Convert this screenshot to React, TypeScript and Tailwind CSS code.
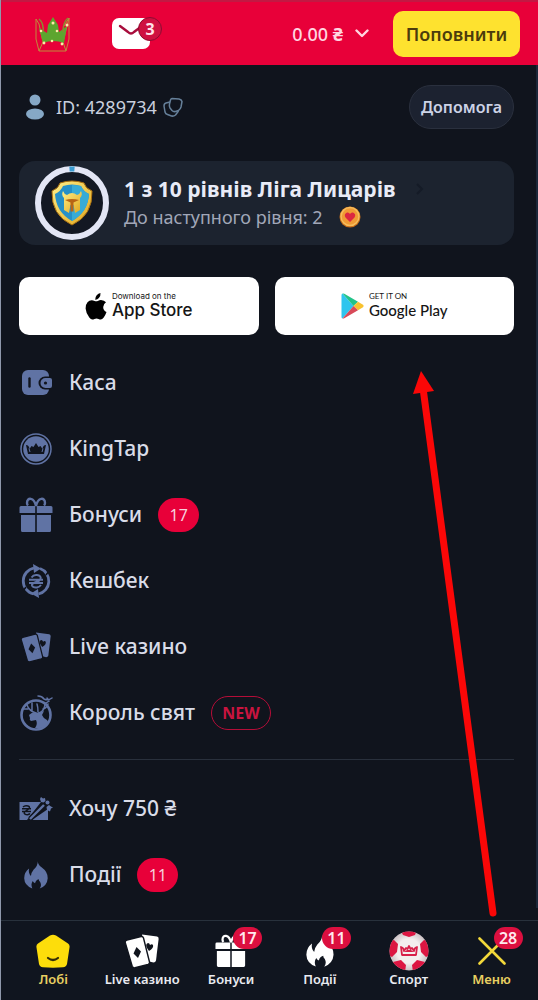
import React from "react";
import clsx from "clsx";

type IconProps = { className?: string };

const CrownLogo = () => (
  <svg viewBox="0 0 36 36" className="h-9 w-9" aria-hidden="true">
    <path d="M4 8 1 3v20l3 12h27l3-12V2l-5 8M4 8l4 18-4 9M31 35l-3-9 6-24" fill="none" stroke="#c08a3c" strokeWidth="1" />
    <path d="M8 27 4 12l8 5 1-8 5-8 5 8 1 7 8-6-3 17Q18 23 8 27Z" fill="#5da52f" />
    <path d="M4 3q5 4 4 13M33 2q-5 4-5 14" fill="none" stroke="#8a8a30" strokeWidth="1.500" />
    <g fill="#ffe9a8">
      <circle cx="18" cy="7" r="1.5" />
      <circle cx="6" cy="15" r="1.3" />
      <circle cx="32" cy="9" r="1.5" />
      <circle cx="22" cy="15" r="1.3" />
      <circle cx="9" cy="27" r="1.4" />
      <circle cx="17" cy="25" r="1.3" />
      <circle cx="27" cy="28" r="1.4" />
    </g>
  </svg>
);

const MailIcon = () => (
  <svg viewBox="0 0 38 31" className="h-[31px] w-[38px]" aria-hidden="true">
    <rect width="38" height="31" rx="7" fill="#fff" />
    <path d="m8 8 8 6q3 3 6 0l8-6" fill="none" stroke="#a80d3c" strokeWidth="2.4" strokeLinecap="round" />
  </svg>
);

const UserIcon = () => (
  <svg viewBox="0 0 18 26" className="h-[26px] w-[18px]" fill="#86a8c6" aria-hidden="true">
    <circle cx="9" cy="6" r="5.5" />
    <ellipse cx="9" cy="20" rx="9" ry="5.5" />
  </svg>
);

const CopyIcon = () => (
  <svg viewBox="0 0 20 20" className="h-5 w-5" fill="none" stroke="#66809a" strokeWidth="1.5" strokeLinejoin="round" aria-hidden="true">
    <path d="M9 1.500 16 2q2.500.5 3 2.500L18 10q-.5 2-2.500 3.500l-3 1q-2 .5-3.500-1L7 11Q6 9 6.500 7L7.500 3Q8 1.500 9 1.500Z" />
    <path d="M7 5 3 6Q1 6.500 1 9l1 6q.5 2 2.500 2.500l4 1.500q2 .5 4-1l3-4" />
  </svg>
);

const LeagueBadge = () => (
  <svg viewBox="0 0 74 74" className="h-[74px] w-[74px] shrink-0" aria-hidden="true">
    <defs>
      <linearGradient id="gold" x1="0" y1="0" x2="1" y2="1">
        <stop offset="0" stopColor="#fff08a" />
        <stop offset="1" stopColor="#e0a51b" />
      </linearGradient>
    </defs>
    <circle cx="37" cy="37" r="34" fill="#131823" stroke="#e3e6f5" strokeWidth="6" />
    <path d="M34.500 3.100A34 34 0 0 1 39.500 3.100" fill="none" stroke="#3a9bd0" strokeWidth="5" />
    <path d="M25 17q12-4 24 0 1 5 8 8 1 24-20 34-21-10-20-34 7-3 8-8Z" fill="url(#gold)" stroke="#a96f10" strokeWidth="1" />
    <path d="M28 20q9-3 18 0 2 5 8 8-1 18-17 27-16-9-17-27 6-3 8-8Z" fill="#2590c8" />
    <path d="M37 19v36q16-9 17-27-6-3-8-8-4-1-9-1Z" fill="#37abd6" />
    <path d="M29 32q-3-3-1-7 1 3 4 4 5-4 10 0 3-1 4-4 2 4-1 7v12l-5 3-1.500-8h-3L34 47l-5-3Z" fill="url(#gold)" />
    <path d="M30 34q7-2 14 0l-5.500 2.500v9h-3v-9Z" fill="#b86414" />
  </svg>
);

const HeartCoin = () => (
  <svg viewBox="0 0 22 22" className="h-[22px] w-[22px]" aria-hidden="true">
    <circle cx="11" cy="11" r="10.500" fill="#c96c18" />
    <circle cx="11" cy="10.500" r="9" fill="#f09a35" stroke="#f6bd5c" strokeWidth="1.500" />
    <path d="M11 16 6.500 11.500Q4.500 8 8 6.500q2-.5 3 1.500 1-2 3-1.500 3.500 1.500 1.500 5Z" fill="#dc2740" />
  </svg>
);

const AppleIcon = () => (
  <svg viewBox="0 0 22 27" className="h-[27px] w-[22px]" fill="#000" aria-hidden="true">
    <path d="M15.500 0q.3 3-1.600 5-1.600 1.900-3.700 1.700-.2-2.500 1.500-4.500Q13.300.4 15.500 0Z" />
    <path d="M21 9.200q-2.800 1.800-2.800 4.800 0 3.500 3.300 5-1 3-2.800 5.500-1.500 2-3 2-1 0-2.200-.6-2-.9-4 0-1.200.6-2.200.6-1.500 0-3-2.100Q.8 19.500.6 15.400.5 11.500 2.500 9.200q1.700-2 4.300-2 1.300 0 2.800.7 1.600.7 3.200 0 1.600-.8 3.200-.8 3.300.2 5 2.100Z" />
  </svg>
);

const PlayIcon = () => (
  <svg viewBox="0 0 23 26" className="h-[26px] w-[23px]" aria-hidden="true">
    <path d="M1.500.5 12.500 13 1.500 25.500Q.5 25 .5 24V2Q.5 1 1.500.5Z" fill="#2fc5ee" />
    <path d="M1.500.5q.8-.3 1.800.3L17 8.800 12.500 13Z" fill="#22c389" />
    <path d="m17 8.800 5 3q1.200 1.200 0 2.400l-5 3L12.500 13Z" fill="#f8c22f" />
    <path d="m12.500 13 4.500 4.200-13.700 8q-1 .6-1.800.3Z" fill="#d84a59" />
  </svg>
);

const WalletIcon = ({ className }: IconProps) => (
  <svg viewBox="0 0 32 32" className={className} aria-hidden="true">
    <rect x="2" y="3" width="27" height="25" rx="6" fill="currentColor" />
    <path d="M9.500 11.500v8" stroke="#10141d" strokeWidth="2.400" strokeLinecap="round" />
    <path d="M33 9.500h-8a6.500 6.500 0 0 0 0 13h8Z" fill="#10141d" />
    <path d="M30 11h-4.500a4.500 4.500 0 0 0 0 10H30q2 0 2-2v-6q0-2-2-2Z" fill="currentColor" />
    <circle cx="25.500" cy="16" r="1.600" fill="#10141d" />
  </svg>
);

const CoinIcon = ({ className }: IconProps) => (
  <svg viewBox="0 0 32 32" className={className} aria-hidden="true">
    <circle cx="16" cy="16" r="15" fill="none" stroke="currentColor" strokeWidth="1.500" />
    <circle cx="16" cy="16" r="12.800" fill="currentColor" />
    <path d="m8 21-2-9q3 0 3.500 4l2-3 2 1 2.500-4 2.500 4 2-1 2 3Q23 12 26 12l-2 9Z" fill="#10141d" />
    <path d="M9 15.500 10 19M23 15.500 22 19" stroke="currentColor" strokeWidth="1" />
  </svg>
);

const GiftIcon = ({ className }: IconProps) => (
  <svg viewBox="0 0 34 36" className={className} fill="currentColor" aria-hidden="true">
    <path d="M17 9C15 0 8 0 8 6q0 1.500 1 2.500M17 9c2-9 9-9 9-3q0 1.500-1 2.500" fill="none" stroke="currentColor" strokeWidth="2.400" />
    <path d="M2 9h14.200v7H.5v-5.500Q.5 9 2 9ZM17.800 9H32q1.500 0 1.500 1.500V16H17.800ZM2 18h14.200v17H3.500Q2 35 2 33.500ZM17.800 18H32v15.500q0 1.500-1.500 1.500H17.800Z" />
  </svg>
);

const CashbackIcon = ({ className }: IconProps) => (
  <svg viewBox="0 0 32 34" className={className} aria-hidden="true">
    <g fill="none" stroke="currentColor" strokeWidth="2.800">
      <path d="M13.500 30A13.300 13.300 0 0 1 14 4M18.500 30A13.300 13.300 0 0 0 20 4.500" />
    </g>
    <path d="m13 0 8 4.500-7 4.500ZM19 34l-8-4.500 7-4.500Z" fill="currentColor" />
    <path d="m6 23-3 4M26 11l3-4" stroke="#10141d" strokeWidth="1.500" />
    <path d="M11.500 13.500q2-3 5.500-2.500 4.500.7 3.500 4-1 2-4.500 3-4.500 1.500-4 3.500 1 2.500 5 2 2.500-.5 4-2.500M9 15.700h14M9 19h14" fill="none" stroke="currentColor" strokeWidth="2" />
  </svg>
);

const CardsIcon = ({ className }: IconProps) => (
  <svg viewBox="0 0 34 34" className={className} aria-hidden="true">
    <path d="m17 .5 15 2q1.800.3 1.600 2.500L31 26.500q-.5 2-2.500 2L22 27Z" fill="currentColor" />
    <path d="M22 14q-2-4 1-5 1.500 0 2 2 2-1.500 3 0 1 3-4 6Z" fill="#10141d" />
    <path d="m2 6 14-3.500q2-.3 2.500 1.500l6 24q.3 2-1.500 2.500l-13 3.300q-2 .3-2.800-1.500L.2 8.500Q0 6.700 2 6Z" fill="currentColor" stroke="#10141d" strokeWidth="1.400" />
    <path d="m11.500 13 4.500 4.500-3 6.500-4.500-4.500Z" fill="#10141d" />
  </svg>
);

const DeerIcon = ({ className }: IconProps) => (
  <svg viewBox="0 0 34 36" className={className} aria-hidden="true">
    <circle cx="17" cy="20" r="14.500" fill="none" stroke="currentColor" strokeWidth="2.600" />
    <g fill="none" stroke="currentColor" strokeWidth="1.500" strokeLinecap="round">
      <path d="M17 18q-7-2-9-8M9 14H5M13 16V8M20 18q6-2 6-10M24 14q4-1 5-5M19 17q0-5-1-8" />
      <path d="M19 1q4 0 6 3 4 2 8-1M27 8l3-2-2-3" />
    </g>
    <path d="M10 20q4-4 9-2l6-2-2 4q1 3 5 5 2 2 1 4-5 5-13 4 3-4 1-8l-5 1q-2-1-1-3Z" fill="currentColor" />
  </svg>
);

const VoucherIcon = ({ className }: IconProps) => (
  <svg viewBox="0 0 34 24" className={className} aria-hidden="true">
    <path d="M.5 5H22L8 23H.5ZM29 12v11H13Z" fill="currentColor" />
    <path d="M4 10q2-2 5-1 3 1 0 3.500l-3 2q-2 2 1 3 3 .5 4-1M3 11.800h9M3 14.500h9" fill="none" stroke="#10141d" strokeWidth="1.500" />
    <path d="M11 22 25 8" stroke="#10141d" strokeWidth="5" />
    <path d="M11 22 25 8" stroke="currentColor" strokeWidth="2.400" />
    <path d="m22 0 2 1.500 2-.5.500 3-2 1.500-2.500-.5-1-3ZM30 8l2 1.500 2 1-2 1-1 3-3-1.500-.5-3Z" fill="currentColor" />
    <circle cx="28.500" cy="5.500" r="2" fill="currentColor" />
  </svg>
);

const FlameIcon = ({ className }: IconProps) => (
  <svg viewBox="0 0 26 30" className={className} fill="currentColor" aria-hidden="true">
    <path d="M15 0q0 4 4 6.500 7 5 6.700 12-.5 8-8.700 11.200 2.500-3.700.5-7.200-1.500-1-1.500-3-3.500 1-4 4.500Q10 23 9.500 21.500q-2.500 3.500-.5 8Q.5 26.500.2 18.500.2 12 5.500 8q-1 5 2 8 .500-4 3-7Q15 5 15 0Z" />
  </svg>
);

const LobbyIcon = ({ className }: IconProps) => (
  <svg viewBox="0 0 34 34" className={className} aria-hidden="true">
    <path d="M14 1.500q3-1.500 6 0l12 8q2 1.500 1.500 4L31 30q-.7 3-4 3.300-10 .9-20 0-3.300-.3-4-3.300L.5 13.500Q0 11 2 9.500Z" fill="#fddd0b" />
    <path d="M12 24q5 4 10 0" fill="none" stroke="#332d08" strokeWidth="2.200" strokeLinecap="round" />
  </svg>
);

const BallIcon = ({ className }: IconProps) => (
  <svg viewBox="0 0 40 40" className={className} aria-hidden="true">
    <defs>
      <clipPath id="ball"><circle cx="20" cy="20" r="19.500" /></clipPath>
      <radialGradient id="shade">
        <stop offset=".6" stopColor="#f3eeee" />
        <stop offset="1" stopColor="#c9bfc2" />
      </radialGradient>
    </defs>
    <g clipPath="url(#ball)">
      <circle cx="20" cy="20" r="20" fill="url(#shade)" />
      <path d="m12 0 2 4 6 2 6-2 2-5ZM0 10l5-1 4 4-1 8-5 5-4-2ZM40 10l-5-1-4 4 1 8 5 5 4-2ZM4 31l8-2 5 5-1 7H8ZM36 31l-8-2-5 5 1 7h8Z" fill="#dc1642" />
    </g>
    <path d="m13 24-1-8q3 1 3 4l2-3 1.500 1 1.500-3 1.500 3 1.500-1 2 3q0-3 3-4l-1 8Z" fill="none" stroke="#d81f49" strokeWidth="1.800" strokeLinejoin="round" />
    <path d="M15 21 18 19h4l3 2Z" fill="#d81f49" />
  </svg>
);

const CrossIcon = ({ className }: IconProps) => (
  <svg viewBox="0 0 28 28" className={className} aria-hidden="true">
    <path d="m1.500 1.500 25 25M26.500 1.500l-25 25" stroke="#f2d83a" strokeWidth="2.600" strokeLinecap="round" />
  </svg>
);

type MenuItem = {
  label: string;
  Icon: (props: IconProps) => React.ReactElement;
  size: string;
  count?: number;
  isNew?: boolean;
};

const mainMenu: MenuItem[] = [
  { label: "Каса", Icon: WalletIcon, size: "h-8 w-8" },
  { label: "KingTap", Icon: CoinIcon, size: "h-8 w-8" },
  { label: "Бонуси", Icon: GiftIcon, size: "h-9 w-[34px]", count: 17 },
  { label: "Кешбек", Icon: CashbackIcon, size: "h-[34px] w-8" },
  { label: "Live казино", Icon: CardsIcon, size: "h-[30px] w-[30px]" },
  { label: "Король свят", Icon: DeerIcon, size: "h-9 w-[34px]", isNew: true },
];

const extraMenu: MenuItem[] = [
  { label: "Хочу 750 ₴", Icon: VoucherIcon, size: "h-6 w-[34px]" },
  { label: "Події", Icon: FlameIcon, size: "h-7 w-6", count: 11 },
];

const MenuList = ({ items }: { items: MenuItem[] }) => (
  <ul>
    {items.map(({ label, Icon, size, count, isNew }) => (
      <li key={label}>
        <a href="#" className="flex h-[66px] items-center text-[21px] font-medium text-[#d9dce8]">
          <span className="mr-4 flex w-[34px] justify-center text-[#6073a4]">
            <Icon className={size} />
          </span>
          {label}
          {count && (
            <span className="ml-4 flex h-[34px] w-[41px] items-center justify-center rounded-full bg-[#e80039] text-base font-normal text-[#f6cfdc]">
              {count}
            </span>
          )}
          {isNew && (
            <span className="ml-4 flex h-[34px] w-[60px] items-center justify-center rounded-full border border-[#b50d38] text-base font-bold text-[#c9143f]">
              NEW
            </span>
          )}
        </a>
      </li>
    ))}
  </ul>
);

const tabs = [
  { label: "Лобі", Icon: LobbyIcon, size: "h-[34px] w-[34px]", active: true },
  { label: "Live казино", Icon: CardsIcon, size: "h-[34px] w-[34px]" },
  { label: "Бонуси", Icon: GiftIcon, size: "h-[34px] w-8", count: 17 },
  { label: "Події", Icon: FlameIcon, size: "h-8 w-7", count: 11 },
  { label: "Спорт", Icon: BallIcon, size: "h-10 w-10" },
  { label: "Меню", Icon: CrossIcon, size: "h-7 w-7", count: 28, active: true },
];

const Header = () => (
  <header className="sticky top-0 z-10 flex h-[65px] items-center border-t-2 border-[#c31843] bg-[#e80039] pr-[18px] pl-[34px]">
    <a href="#" aria-label="Головна">
      <CrownLogo />
    </a>
    <button type="button" aria-label="Повідомлення" className="relative ml-[41px]">
      <MailIcon />
      <span className="absolute -top-px -right-3 flex h-6 w-6 items-center justify-center rounded-full border border-[#8f0a31] bg-[#cf1041] text-base font-bold text-[#ffe3ea]">
        3
      </span>
    </button>
    <button type="button" className="ml-auto flex items-center text-lg font-medium text-[#ffd5e0]">
      <span>
        0.00 <b>₴</b>
      </span>
      <svg viewBox="0 0 14 9" className="ml-3 h-[9px] w-[14px]" aria-hidden="true">
        <path d="m1.500 1.500 5.500 5.500 5.500-5.500" fill="none" stroke="currentColor" strokeWidth="2.400" strokeLinecap="round" strokeLinejoin="round" />
      </svg>
    </button>
    <button type="button" className="ml-6 h-[46px] w-[127px] rounded-[10px] bg-[#fee22f] text-lg font-semibold text-[#4c3c0c]">
      Поповнити
    </button>
  </header>
);

const TabBar = () => (
  <nav className="sticky bottom-0 z-10 mt-auto grid h-20 grid-cols-[repeat(5,89fr)_77fr] border-t border-[#28313c] bg-[#10151f] px-2">
    {tabs.map(({ label, Icon, size, count, active }) => (
      <a
        key={label}
        href="#"
        className={clsx(
          "flex flex-col items-center pt-2.5 text-[13px] leading-4 font-semibold whitespace-nowrap",
          active ? "text-[#e8cf62]" : "text-[#e9eaf0]"
        )}
      >
        <span className="relative flex h-10 w-10 items-center justify-center text-white">
          <Icon className={size} />
          {count && (
            <span className="absolute -top-1 left-[22px] flex h-[22px] w-[29px] items-center justify-center rounded-full bg-[#dc0f3f] text-base font-semibold text-[#ffe9ee]">
              {count}
            </span>
          )}
        </span>
        {label}
      </a>
    ))}
  </nav>
);

const App = () => (
  <div className="relative flex min-h-screen flex-col border-l border-[#8f98ab] bg-[#10141d] font-['Noto_Sans','Open_Sans',sans-serif]">
    <Header />
    <main className="flex flex-col border-r-2 border-[#1b2739] pr-[22px] pl-[18px]">
      <div className="mt-5 flex h-11 items-center">
        <span className="ml-[7px]">
          <UserIcon />
        </span>
        <span className="ml-3 text-lg text-[#c9cfdd]">ID: 4289734</span>
        <button type="button" aria-label="Скопіювати ID" className="ml-1.5">
          <CopyIcon />
        </button>
        <button type="button" className="ml-auto h-11 w-[105px] rounded-full border border-[#2a303e] bg-[#1c2230] text-base font-semibold text-[#ccd3e6]">
          Допомога
        </button>
      </div>

      <a href="#" className="mt-8 flex h-[84px] items-center rounded-2xl bg-[#1c232f] px-4">
        <LeagueBadge />
        <span className="ml-[15px] flex flex-col">
          <span className="flex items-center text-[21px] leading-7 font-bold text-[#e8ebf7]">
            1 з 10 рівнів Ліга Лицарів
            <svg viewBox="0 0 8 12" className="ml-5 h-3 w-2" fill="none" stroke="#151b27" strokeWidth="2" aria-hidden="true">
              <path d="m1 1 5 5-5 5" />
            </svg>
          </span>
          <span className="flex items-center text-lg leading-7 text-[#a1a7b8]">
            До наступного рівня: 2
            <span className="ml-4">
              <HeartCoin />
            </span>
          </span>
        </span>
      </a>

      <div className="mt-8 mb-[15px] grid grid-cols-2 gap-4 text-[#151515]">
        <a href="#" className="flex h-[58px] items-center justify-center gap-[5px] rounded-[10px] bg-white font-['Inter',sans-serif]">
          <AppleIcon />
          <span className="flex flex-col">
            <span className="text-[8px] leading-2">Download on the</span>
            <span className="text-[17px] leading-5 font-medium">App Store</span>
          </span>
        </a>
        <a href="#" className="flex h-[58px] items-center justify-center gap-[5px] rounded-[10px] bg-white font-['Lato',sans-serif]">
          <PlayIcon />
          <span className="flex flex-col">
            <span className="text-[8px] leading-2">GET IT ON</span>
            <span className="text-[15px] leading-5 font-medium">Google Play</span>
          </span>
        </a>
      </div>

      <MenuList items={mainMenu} />
      <hr className="mt-[13px] mb-4 border-[#29303c]" />
      <MenuList items={extraMenu} />
    </main>
    <TabBar />

    <svg viewBox="0 0 90 550" className="pointer-events-none absolute top-[370px] right-10 z-20 h-[550px] w-[90px]" aria-hidden="true">
      <path d="M15 18 85 543" stroke="#fb0707" strokeWidth="7" strokeLinecap="round" />
      <path d="M13 1 5 24l21-3Z" fill="#fb0707" />
    </svg>
  </div>
);

export default App;
